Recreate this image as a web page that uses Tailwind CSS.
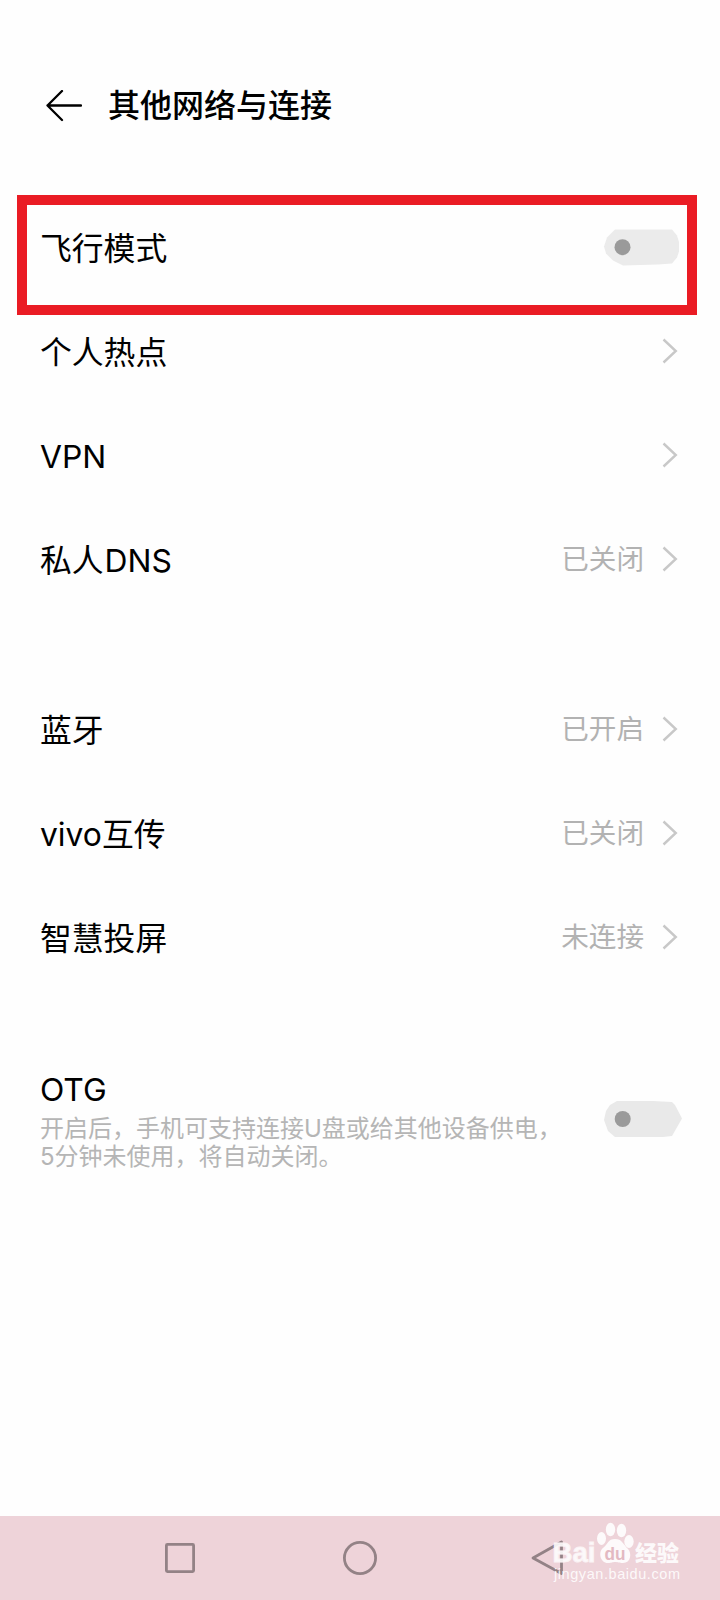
<!DOCTYPE html>
<html lang="zh-CN">
<head>
<meta charset="utf-8">
<meta name="viewport" content="width=720">
<title>其他网络与连接</title>
<script src="https://cdn.jsdelivr.net/npm/@tailwindcss/browser@4"></script>
</head>
<body class="bg-[#fefefe]">
<svg class="hidden">
  <symbol id="chevron" viewBox="0 0 16 26"><path d="M1.5 1.5 13.8 13 1.5 24.5" fill="none" stroke="#c8c8c8" stroke-width="2.4"/></symbol>
</svg>
<div class="relative flex h-[1600px] w-[720px] flex-col overflow-hidden font-['Inter','Noto_Sans_CJK_SC',sans-serif] text-[31.8px] text-black">
  <header class="flex h-[196px] items-center gap-[26px] pt-[15px] pl-[46px]">
    <svg class="h-[32px] w-[36px]" viewBox="0 0 36 32" fill="none" stroke="#000" stroke-width="2.3" stroke-linecap="round" stroke-linejoin="round"><path d="M35 15.500H1.500M16 1 1.500 15.500 16 30"/></svg>
    <h1 class="pt-px text-[32px] leading-[40px] font-medium">其他网络与连接</h1>
  </header>

  <main class="flex-1">
    <section>
      <div class="flex h-[104px] items-center justify-between pr-[39px] pl-[40px]">
        <span class="pt-px">飞行模式</span>
        <svg class="h-[38px] w-[78px]" viewBox="0 0 78 38"><path d="M12 .5H69L74 6.500 76 13V22.500L74 28.500 69 34.500 55 35.500 20 36.500 10 31.500 3 24.500 1 17.500 4 8.500Z" fill="#ebebeb"/><circle cx="19.500" cy="18.200" r="8" fill="#9a9a9a"/></svg>
      </div>
      <div class="flex h-[104px] items-center justify-between pr-[42px] pl-[40px]">
        <span class="pt-px">个人热点</span>
        <svg class="mb-[2px] h-[26px] w-[16px]"><use href="#chevron"/></svg>
      </div>
      <div class="flex h-[104px] items-center justify-between pr-[42px] pl-[40px]">
        <span class="pt-px">VPN</span>
        <svg class="mb-[2px] h-[26px] w-[16px]"><use href="#chevron"/></svg>
      </div>
      <div class="flex h-[104px] items-center justify-between pr-[42px] pl-[40px]">
        <span class="pt-px">私人<span class="pl-[1px]">DNS</span></span>
        <span class="flex items-center gap-[18px] text-[27.6px] text-[#b2b2b2]"><span>已关闭</span><svg class="mb-[2px] h-[26px] w-[16px]"><use href="#chevron"/></svg></span>
      </div>
    </section>

    <section class="mt-[66px]">
      <div class="flex h-[104px] items-center justify-between pr-[42px] pl-[40px]">
        <span class="pt-px">蓝牙</span>
        <span class="flex items-center gap-[18px] text-[27.6px] text-[#b2b2b2]"><span>已开启</span><svg class="mb-[2px] h-[26px] w-[16px]"><use href="#chevron"/></svg></span>
      </div>
      <div class="flex h-[104px] items-center justify-between pr-[42px] pl-[40px]">
        <span class="pt-px">vivo互传</span>
        <span class="flex items-center gap-[18px] text-[27.6px] text-[#b2b2b2]"><span>已关闭</span><svg class="mb-[2px] h-[26px] w-[16px]"><use href="#chevron"/></svg></span>
      </div>
      <div class="flex h-[104px] items-center justify-between pr-[42px] pl-[40px]">
        <span class="pt-px">智慧投屏</span>
        <span class="flex items-center gap-[18px] text-[27.6px] text-[#b2b2b2]"><span>未连接</span><svg class="mb-[2px] h-[26px] w-[16px]"><use href="#chevron"/></svg></span>
      </div>
    </section>

    <section class="mt-[66px] flex h-[126px] items-center justify-between pr-[38px] pl-[40px]">
      <div>
        <div class="leading-[44px]">OTG</div>
        <p class="pt-[3px] text-[24px] leading-[28px] whitespace-nowrap text-[#b5b5b5]">开启后，手机可支持连接U盘或给其他设备供电，<br>5分钟未使用，将自动关闭。</p>
      </div>
      <svg class="h-[38px] w-[79px]" viewBox="0 0 79 38"><path d="M14 1 50 1 69 2 72 5 79 18.500 69 36 60 37H12L5 31 1 20 3 11 7 5Z" fill="#e9e9e9"/><circle cx="19.700" cy="19" r="8" fill="#9a9a9a"/></svg>
    </section>
  </main>

  <div class="absolute top-[195px] left-[17px] h-[120px] w-[680px] border-[10px] border-[#ea1c24]"></div>

  <nav class="h-[84px] bg-[#eed3d9]">
    <svg class="block h-[84px] w-[720px]" viewBox="0 0 720 84">
      <g fill="none" stroke="#938286" stroke-width="2.800" stroke-linejoin="round">
        <rect x="166.400" y="28.400" width="27.200" height="27.200" rx="1"/>
        <circle cx="360" cy="42" r="15.600"/>
        <path d="M533 42 561.500 26V57.500Z"/>
      </g>
      <g fill="#fff" fill-opacity=".88" font-family="Liberation Sans, sans-serif">
        <text x="552.500" y="45.500" font-size="28" font-weight="700" stroke="#fbf3f5" stroke-width=".9" textLength="43" lengthAdjust="spacingAndGlyphs">Bai</text>
        <ellipse cx="601.500" cy="22.500" rx="4.500" ry="6.500"/>
        <ellipse cx="610.500" cy="13.500" rx="4.700" ry="6.800"/>
        <ellipse cx="621.500" cy="14.500" rx="4.700" ry="6.800"/>
        <ellipse cx="629" cy="25.500" rx="4.700" ry="6.500"/>
        <path d="M615 23C608 23 608 28 603 32C598 36 600 47 608 47C612 47 612 46 615 46C618 46 619 47 623 47C631 47 632 37 628 33C623 28 622 23 615 23Z"/>
        <text x="604.500" y="43.500" font-size="19" font-weight="700" fill="#e3b9c2" fill-opacity="1" textLength="21" lengthAdjust="spacingAndGlyphs">du</text>
        <text x="635" y="44.500" font-size="22" font-weight="900" font-family="Noto Sans CJK SC, sans-serif">经验</text>
        <text x="554" y="62.500" font-size="14.500" textLength="126">jingyan.baidu.com</text>
      </g>
    </svg>
  </nav>
</div>
</body>
</html>
